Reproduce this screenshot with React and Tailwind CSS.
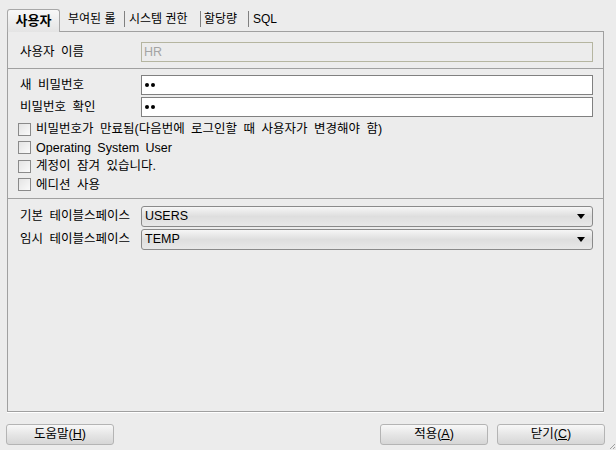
import React from "react";

const font = { fontFamily: '"Liberation Sans", "Noto Sans CJK KR", sans-serif', wordSpacing: "3px" };

const Checkbox = ({ label }) => (
  <label className="flex items-center h-[18.5px] pl-[10px]">
    <span className="w-[13px] h-[13px] border border-[#8a8a8a] bg-gradient-to-br from-[#e4e4e4] to-[#fafafa]" />
    <span className="ml-[5px] text-[12.5px] leading-none text-black">{label}</span>
  </label>
);

const Combo = ({ value }) => (
  <div className="flex items-center w-[452px] h-[21px] border border-[#8a8a8a] rounded-[3px] bg-gradient-to-b from-[#f6f6f6] via-[#dedede] to-[#e8e8e8] pl-[3px] pr-[7px]">
    <span className="flex-1 text-[12.5px] leading-none text-black">{value}</span>
    <svg width="8" height="5" viewBox="0 0 8 5">
      <polygon points="0,0 8,0 4,5" fill="#000" />
    </svg>
  </div>
);

const Button = ({ children, className }) => (
  <button
    className={
      "h-[21px] w-[108px] rounded-[3px] border border-[#b4b4b4] bg-gradient-to-b from-[#f8f8f8] via-[#e6e6e6] to-[#d6d6d6] text-[12.5px] leading-none text-black " +
      (className || "")
    }
  >
    {children}
  </button>
);

const Row = ({ label, children, className }) => (
  <div className={"flex items-center pl-[12px] " + (className || "")}>
    <span className="w-[121px] text-[12.5px] leading-none text-black whitespace-nowrap">{label}</span>
    {children}
  </div>
);

const PwField = () => (
  <div className="flex items-center gap-[2px] w-[452px] h-[20px] border border-[#808080] bg-white pl-[3px]">
    <span className="w-[4px] h-[4px] bg-black rounded-full" />
    <span className="w-[4px] h-[4px] bg-black rounded-full" />
  </div>
);

export default function App() {
  return (
    <div className="relative w-[616px] h-[450px] bg-[#ececec] overflow-hidden" style={font}>
      {/* tabs */}
      <div className="flex items-end h-[31px] pl-[7px]">
        <div className="relative z-10 flex items-center justify-center w-[53px] h-[23px] -mb-px border border-b-0 border-[#a8a8a8] rounded-t-[3px] bg-gradient-to-b from-[#f8f8f8] to-[#e4e4e4] text-[13px] font-bold text-black">
          사용자
        </div>
        <div className="flex items-center h-[20px] mb-[2px] text-[12px] text-black leading-none whitespace-nowrap [word-spacing:0px]">
          <span className="ml-[8px] w-[56px] min-w-0">부여된 롤</span>
          <span className="h-[16px] border-l border-[#808080]" />
          <span className="ml-[4px] w-[71px] min-w-0">시스템 권한</span>
          <span className="h-[16px] border-l border-[#808080]" />
          <span className="ml-[3px] w-[44px] min-w-0">할당량</span>
          <span className="h-[16px] border-l border-[#808080]" />
          <span className="ml-[4px]">SQL</span>
        </div>
      </div>

      {/* panel */}
      <div className="ml-[7px] w-[597px] h-[381px] border border-[#a0a0a0] shadow-[0_1px_0_#ffffff]">
        <Row label="사용자 이름" className="mt-[10px]">
          <div className="flex items-center w-[452px] h-[20px] border border-[#b5b5a0] bg-[#ececec] pl-[2px] text-[12.5px] leading-none text-[#a4a4a4]">
            HR
          </div>
        </Row>
        <div className="mt-[6px] border-t border-[#a0a0a0]" />

        <Row label="새 비밀번호" className="mt-[6px]">
          <PwField />
        </Row>
        <Row label="비밀번호 확인" className="mt-[2px]">
          <PwField />
        </Row>
        <div className="mt-[3px]">
          <Checkbox label="비밀번호가 만료됨(다음번에 로그인할 때 사용자가 변경해야 함)" />
          <Checkbox label="Operating System User" />
          <Checkbox label="계정이 잠겨 있습니다." />
          <Checkbox label="에디션 사용" />
        </div>
        <div className="mt-[4px] border-t border-[#a0a0a0]" />

        <Row label="기본 테이블스페이스" className="mt-[7px]">
          <Combo value="USERS" />
        </Row>
        <Row label="임시 테이블스페이스" className="mt-[2px]">
          <Combo value="TEMP" />
        </Row>
      </div>

      {/* buttons */}
      <div className="flex mt-[12px] pl-[6px]">
        <Button>
          도움말(<span className="underline">H</span>)
        </Button>
        <Button className="ml-[266px]">
          적용(<span className="underline">A</span>)
        </Button>
        <Button className="ml-[9px]">
          닫기(<span className="underline">C</span>)
        </Button>
      </div>

      {/* resize grip */}
      <svg className="absolute right-0 bottom-0" width="8" height="8" viewBox="0 0 8 8">
        <line x1="7" y1="2" x2="2" y2="7" stroke="#a0a0a0" />
        <line x1="7" y1="5" x2="5" y2="7" stroke="#a0a0a0" />
      </svg>
    </div>
  );
}
